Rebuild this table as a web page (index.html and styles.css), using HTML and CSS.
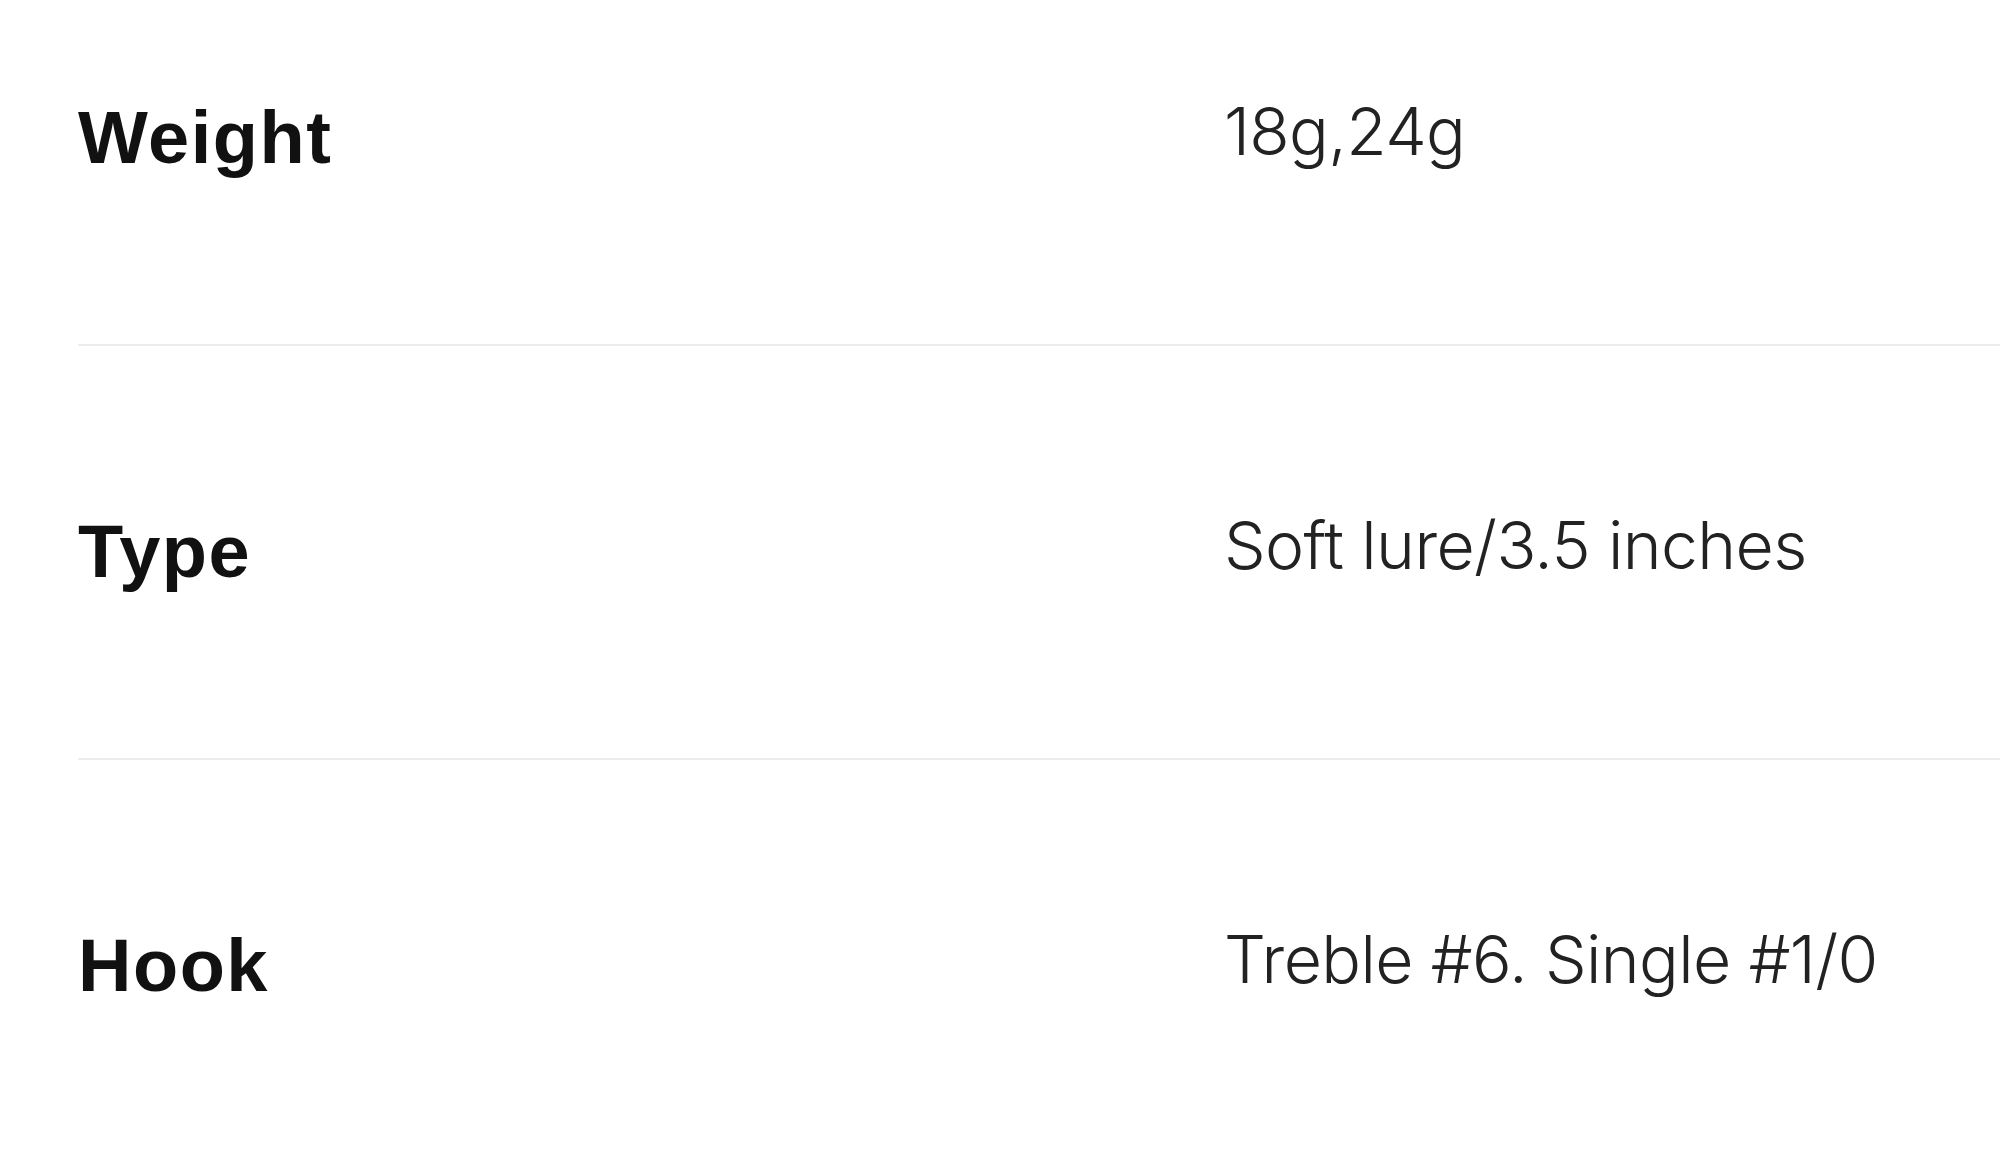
FILE: index.html
```html
<!DOCTYPE html>
<html lang="en">
<head>
<meta charset="utf-8">
<title>Spec</title>
<link rel="stylesheet" href="styles.css">
</head>
<body>
<div class="spec">
  <div class="row">
    <div class="label">Weight</div>
    <div class="value">18g,24g</div>
  </div>
  <div class="row">
    <div class="label">Type</div>
    <div class="value">Soft lure/3.5 inches</div>
  </div>
  <div class="row">
    <div class="label">Hook</div>
    <div class="value">Treble #6. Single #1/0</div>
  </div>
</div>
</body>
</html>
```
FILE: styles.css
```css
html, body {
  margin: 0;
  padding: 0;
  background: #ffffff;
  overflow: hidden;
}
.spec {
  margin-top: -68px;
  margin-left: 78px;
}
.row {
  display: grid;
  grid-template-columns: 1146px 1fr;
  height: 412px;
  align-items: center;
  border-bottom: 2px solid #ececec;
}
.label {
  font-family: "Liberation Sans", Arial, sans-serif;
  font-weight: 700;
  font-size: 74px;
  letter-spacing: 1.5px;
  color: #111111;
  line-height: 1;
}
.value {
  font-family: Inter, "Liberation Sans", sans-serif;
  font-weight: 300;
  font-size: 66px;
  letter-spacing: -0.6px;
  color: #222222;
  line-height: 1;
  padding-bottom: 14px;
}
```
